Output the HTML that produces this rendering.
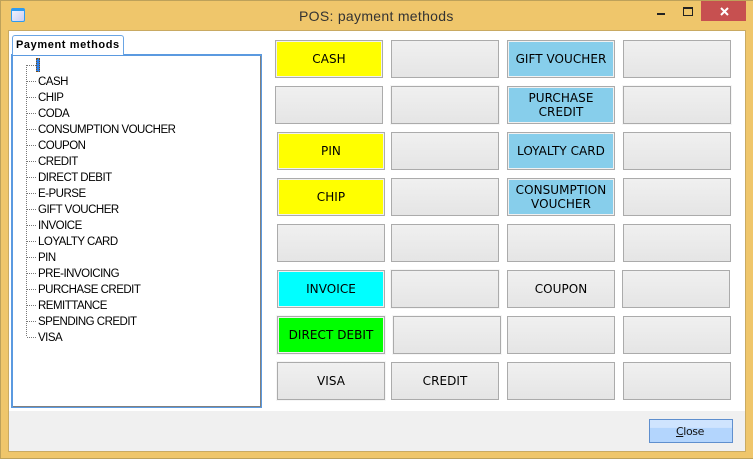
<!DOCTYPE html>
<html><head><meta charset="utf-8"><style>
*{box-sizing:border-box}
html,body{margin:0;padding:0;width:753px;height:459px;overflow:hidden;background:#efc66b;font-family:"DejaVu Sans","Liberation Sans",sans-serif}
.a{position:absolute}
#win{position:absolute;left:0;top:0;width:753px;height:459px;border:1px solid #bda15a;border-right:0;background:#efc66b}
#content{position:absolute;left:8px;top:30px;width:738px;height:422px;background:#fff;border:1px solid #c9aa62}
#foot{position:absolute;left:9px;top:411px;width:736px;height:40px;background:#f0f0f0}
#title{position:absolute;left:299px;top:7px;font-size:14px;line-height:18px;color:#333;white-space:nowrap;font-family:"Liberation Sans",sans-serif;letter-spacing:.3px}
#x{position:absolute;left:701px;top:1px;width:45px;height:20px;background:#c75050}
.b{position:absolute;width:108px;height:38px;border:1px solid #ababab;background:linear-gradient(#f0f0f0,#e5e5e5);font-size:12px;line-height:14px;color:#000;display:flex;align-items:center;justify-content:center;text-align:center;font-family:"DejaVu Sans",sans-serif;letter-spacing:.05px}
.c{box-shadow:inset 0 0 0 1px #f1f1f1}
.h{outline:1px solid #f6f6f6}
#tab{position:absolute;left:12px;top:35px;width:112px;height:20px;background:#fff;border:1px solid #6aa5e4;border-bottom:0;border-radius:3px 3px 0 0;font:bold 11px/19px "Liberation Sans",sans-serif;color:#000;padding-left:3px;letter-spacing:.6px;z-index:2}
#panel{position:absolute;left:11px;top:54px;width:251px;height:354px;background:#fff;border:2px solid #5b9ae0;outline:0}
#inner{position:absolute;left:13px;top:56px;width:248px;height:351px;border-right:1px solid #808080;border-bottom:1px solid #808080}
.t{position:absolute;left:38px;margin-top:1px;font:11.5px/16px "Liberation Sans",sans-serif;letter-spacing:-.5px;color:#000;white-space:nowrap}
.d{position:absolute;left:27px;width:9px;height:1px;background:repeating-linear-gradient(90deg,#777 0 1px,transparent 1px 2px)}
#close{position:absolute;left:649px;top:419px;width:84px;height:24px;border:1px solid #5f8fce;padding-right:2px;background:linear-gradient(#cfe4fe 0,#cfe4fe 35%,#b3d5fd 36%,#b3d5fd 100%);font:11px/24px "DejaVu Sans",sans-serif;text-align:center;color:#111;letter-spacing:-.4px}
</style></head><body>
<div id="win"></div>
<div id="content"></div>
<div id="foot"></div>

<svg class="a" style="left:11px;top:8px" width="15" height="15" viewBox="0 0 15 15">
<defs><linearGradient id="g" x1="0" y1="0" x2="1" y2="1"><stop offset="0" stop-color="#f4f6ff"/><stop offset="1" stop-color="#c8ccf2"/></linearGradient></defs>
<rect x=".5" y=".5" width="13" height="13" rx="1.5" fill="url(#g)" stroke="#2e9bf0"/>
<rect x="1" y="1" width="12" height="2" fill="#2e9bf0"/>
</svg>
<div id="title">POS: payment methods</div>
<div class="a" style="left:657px;top:13px;width:8px;height:2px;background:#222"></div>
<svg class="a" style="left:683px;top:7px" width="10" height="9"><path d="M.5 1.5H9.5V8.5H.5Z" fill="none" stroke="#222"/><rect x="0" y="0" width="10" height="2" fill="#222"/></svg>
<div id="x"></div>
<svg class="a" style="left:720px;top:7px" width="9" height="9"><path d="M1 1L8 8M8 1L1 8" stroke="#fff" stroke-width="2"/></svg>

<div id="panel"></div>
<div id="inner"></div>
<div id="tab">Payment methods</div>

<svg class="a" style="left:26px;top:60px" width="14" height="280"><path d="M.5 5V277" stroke="#777" stroke-dasharray="1 1"/></svg>
<div class="d" style="top:65px"></div>
<div class="a" style="left:36px;top:58px;width:4px;height:14px;background:#2f7fe6;border:1px dotted #7a4a10"></div>

<div class="d" style="top:81px"></div><div class="t" style="top:73px">CASH</div>
<div class="d" style="top:97px"></div><div class="t" style="top:89px">CHIP</div>
<div class="d" style="top:113px"></div><div class="t" style="top:105px">CODA</div>
<div class="d" style="top:129px"></div><div class="t" style="top:121px">CONSUMPTION VOUCHER</div>
<div class="d" style="top:145px"></div><div class="t" style="top:137px">COUPON</div>
<div class="d" style="top:161px"></div><div class="t" style="top:153px">CREDIT</div>
<div class="d" style="top:177px"></div><div class="t" style="top:169px">DIRECT DEBIT</div>
<div class="d" style="top:193px"></div><div class="t" style="top:185px">E-PURSE</div>
<div class="d" style="top:209px"></div><div class="t" style="top:201px">GIFT VOUCHER</div>
<div class="d" style="top:225px"></div><div class="t" style="top:217px">INVOICE</div>
<div class="d" style="top:241px"></div><div class="t" style="top:233px">LOYALTY CARD</div>
<div class="d" style="top:257px"></div><div class="t" style="top:249px">PIN</div>
<div class="d" style="top:273px"></div><div class="t" style="top:265px">PRE-INVOICING</div>
<div class="d" style="top:289px"></div><div class="t" style="top:281px">PURCHASE CREDIT</div>
<div class="d" style="top:305px"></div><div class="t" style="top:297px">REMITTANCE</div>
<div class="d" style="top:321px"></div><div class="t" style="top:313px">SPENDING CREDIT</div>
<div class="d" style="top:337px"></div><div class="t" style="top:329px">VISA</div>

<div class="b c" style="left:275px;top:40px;background:#ff0">CASH</div>
<div class="b" style="left:391px;top:40px"></div>
<div class="b c" style="left:507px;top:40px;background:#87ceeb">GIFT VOUCHER</div>
<div class="b" style="left:623px;top:40px"></div>

<div class="b" style="left:275px;top:86px"></div>
<div class="b h" style="left:391px;top:86px"></div>
<div class="b c" style="left:507px;top:86px;background:#87ceeb">PURCHASE<br>CREDIT</div>
<div class="b h" style="left:623px;top:86px"></div>

<div class="b c" style="left:277px;top:132px;background:#ff0">PIN</div>
<div class="b" style="left:391px;top:132px"></div>
<div class="b c" style="left:507px;top:132px;background:#87ceeb">LOYALTY CARD</div>
<div class="b" style="left:623px;top:132px"></div>

<div class="b c" style="left:277px;top:178px;background:#ff0">CHIP</div>
<div class="b" style="left:391px;top:178px"></div>
<div class="b c" style="left:507px;top:178px;background:#87ceeb">CONSUMPTION<br>VOUCHER</div>
<div class="b" style="left:623px;top:178px"></div>

<div class="b" style="left:277px;top:224px"></div>
<div class="b" style="left:391px;top:224px"></div>
<div class="b" style="left:507px;top:224px"></div>
<div class="b" style="left:623px;top:224px"></div>

<div class="b c" style="left:277px;top:270px;background:#0ff">INVOICE</div>
<div class="b h" style="left:391px;top:270px"></div>
<div class="b" style="left:507px;top:270px">COUPON</div>
<div class="b" style="left:622px;top:270px"></div>

<div class="b c h" style="left:277px;top:316px;background:#0f0">DIRECT DEBIT</div>
<div class="b h" style="left:393px;top:316px"></div>
<div class="b" style="left:507px;top:316px"></div>
<div class="b" style="left:623px;top:316px"></div>

<div class="b h" style="left:277px;top:362px">VISA</div>
<div class="b" style="left:391px;top:362px">CREDIT</div>
<div class="b" style="left:507px;top:362px"></div>
<div class="b" style="left:623px;top:362px"></div>

<div id="close"><u>C</u>lose</div>
</body></html>
